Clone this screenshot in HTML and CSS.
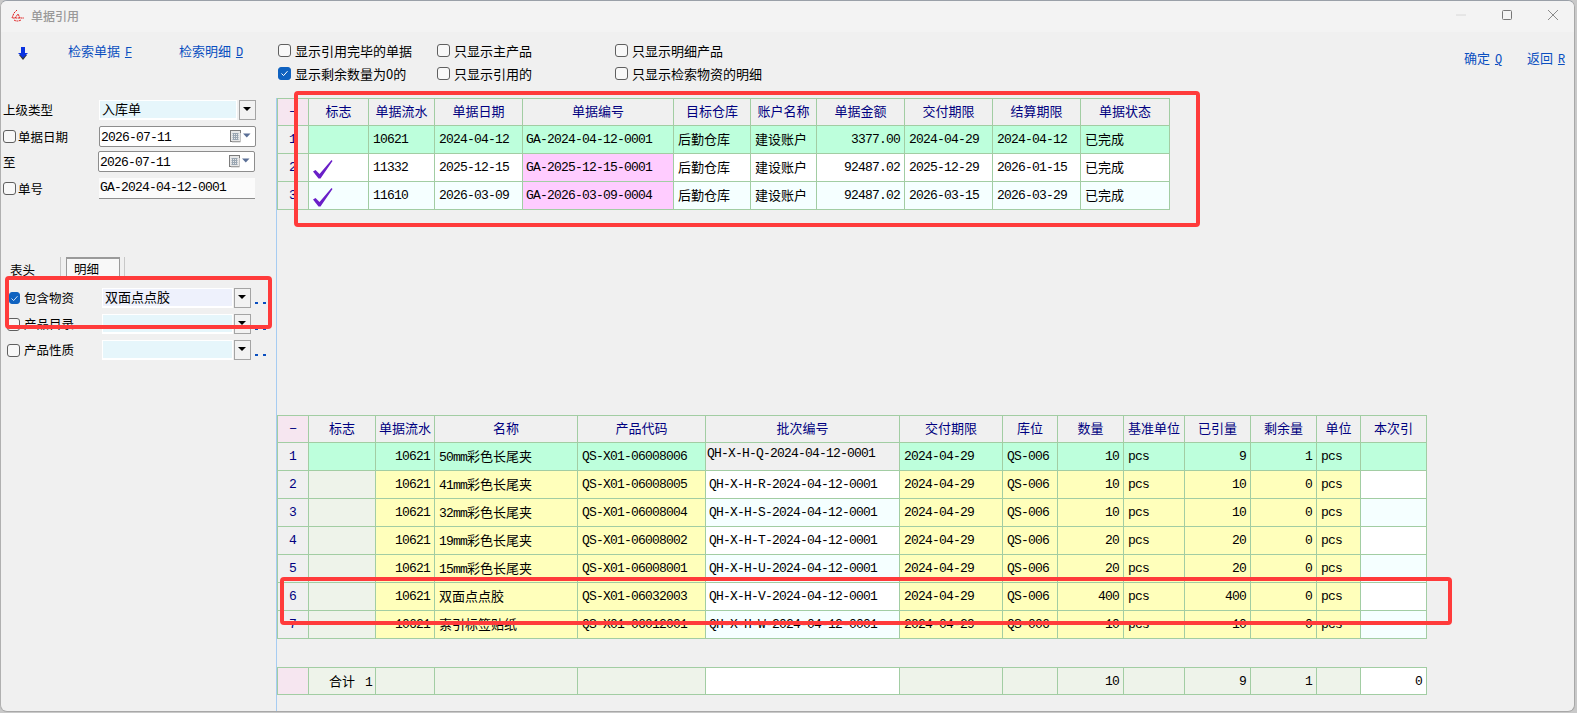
FILE: index.html
```html
<!DOCTYPE html>
<html lang="zh">
<head>
<meta charset="utf-8">
<title>单据引用</title>
<link rel="stylesheet" href="styles.css">
</head>
<body>
<div class="window">
  <header class="titlebar">
    <svg class="logo" width="14" height="13" viewBox="0 0 14 13"><path d="M6 1 3 4 1 9h12M4 9l3-4 2 4M3 11q3 2 7 0" fill="none" stroke="#e02020" stroke-width="1" stroke-dasharray="2 .6"/></svg>
    <span class="wintitle">单据引用</span>
    <span class="winbtns">
      <svg width="12" height="12" viewBox="0 0 12 12"><path d="M1 6h10" stroke="#d8d8d8"/></svg>
      <svg width="12" height="12" viewBox="0 0 12 12"><rect x="1.5" y="1.5" width="9" height="9" rx="1" fill="none" stroke="#777"/></svg>
      <svg width="12" height="12" viewBox="0 0 12 12"><path d="M1 1l10 10M11 1 1 11" stroke="#8a8a8a" fill="none"/></svg>
    </span>
  </header>

  <div class="toolbar">
    <svg class="arrow" width="10" height="13" viewBox="0 0 10 13"><path d="M1 8h8l-4 5z" fill="#333"/><path d="M3 0h4v6h3L5 11 0 6h3z" fill="#0a32e0"/></svg>
    <a class="link l1">检索单据 <u class="m">F</u></a>
    <a class="link l2">检索明细 <u class="m">D</u></a>
    <div class="opts">
      <label class="opt o1"><span class="cb"></span>显示引用完毕的单据</label>
      <label class="opt o2"><span class="cb"></span>只显示主产品</label>
      <label class="opt"><span class="cb"></span>只显示明细产品</label>
      <label class="opt o1"><span class="cb on"><svg width="9" height="9" viewBox="0 0 9 9"><path d="M1.500 4.500 3.600 6.600 7.500 2.200" fill="none" stroke="#fff"/></svg></span>显示剩余数量为0的</label>
      <label class="opt o2"><span class="cb"></span>只显示引用的</label>
      <label class="opt"><span class="cb"></span>只显示检索物资的明细</label>
    </div>
    <div class="actions">
      <a class="link a1">确定 <u class="m">Q</u></a>
      <a class="link a2">返回 <u class="m">R</u></a>
    </div>
  </div>

  <div class="body">
    <aside class="side">
      <div class="frow r1"><span class="lab lab0">上级类型</span><span class="combo">入库单</span><span class="drop"></span></div>
      <div class="frow r2"><span class="cb"></span><span class="lab lab1">单据日期</span><span class="date m"><span class="dt">2026-07-11</span><svg class="cal" width="22" height="13" viewBox="0 0 22 13"><rect x="1.500" y=".5" width="10" height="11" fill="#e8e8e8" stroke="#7c7c7c"/><path d="M11.500 3v9H3" fill="none" stroke="#c4c4c4"/><path d="M3.500 3.500h6M3.500 5.500h6M3.500 7.500h6M3.500 9.500h6M4.500 3v7M6.500 3v7M8.500 3v7" stroke="#9aa6b2"/><path d="M14 3.500h7.500l-3.750 4z" fill="#5a6f96"/></svg></span></div>
      <div class="frow r3"><span class="lab lab2">至</span><span class="date m"><span class="dt">2026-07-11</span><svg class="cal" width="22" height="13" viewBox="0 0 22 13"><rect x="1.500" y=".5" width="10" height="11" fill="#e8e8e8" stroke="#7c7c7c"/><path d="M11.500 3v9H3" fill="none" stroke="#c4c4c4"/><path d="M3.500 3.500h6M3.500 5.500h6M3.500 7.500h6M3.500 9.500h6M4.500 3v7M6.500 3v7M8.500 3v7" stroke="#9aa6b2"/><path d="M14 3.500h7.500l-3.750 4z" fill="#5a6f96"/></svg></span></div>
      <div class="frow r4"><span class="cb"></span><span class="lab lab1">单号</span><span class="input m">GA-2024-04-12-0001</span></div>

      <div class="tabs">
        <span class="tab">表头</span>
        <span class="tabsel"><span class="tabin">明细</span></span>
      </div>

      <div class="frow q1"><span class="cb on sm"><svg width="9" height="9" viewBox="0 0 9 9"><path d="M1.500 4.500 3.600 6.600 7.500 2.200" fill="none" stroke="#cfe0f5"/></svg></span><span class="lab lab3">包含物资</span><span class="combo wide sel">双面点点胶</span><span class="drop"></span><span class="dots"></span></div>
      <div class="frow q2"><span class="cb"></span><span class="lab lab4">产品目录</span><span class="combo wide"></span><span class="drop"></span><span class="dots"></span></div>
      <div class="frow q3"><span class="cb"></span><span class="lab lab4">产品性质</span><span class="combo wide"></span><span class="drop"></span><span class="dots"></span></div>
    </aside>

    <main class="content">
      <table class="grid g1">
        <colgroup><col class="c31"><col class="c60"><col class="c66"><col class="c88"><col class="c151"><col class="c77"><col class="c66"><col class="c88"><col class="c88"><col class="c88"><col class="c89"></colgroup>
        <tr class="head"><th class="pink">−</th><th>标志</th><th>单据流水</th><th>单据日期</th><th>单据编号</th><th>目标仓库</th><th>账户名称</th><th>单据金额</th><th>交付期限</th><th>结算期限</th><th>单据状态</th></tr>
        <tr class="green"><td class="idx">1</td><td></td><td class="m">10621</td><td class="m">2024-04-12</td><td class="m b">GA-2024-04-12-0001</td><td>后勤仓库</td><td>建设账户</td><td class="m r">3377.00</td><td class="m">2024-04-29</td><td class="m">2024-04-12</td><td>已完成</td></tr>
        <tr class="white"><td class="idx">2</td><td><svg class="tick" width="20" height="19" viewBox="0 0 20 19"><path d="M0 11.500 2.500 10 6.500 14 18.500 0 19.500 1 7.500 18.500 5.500 18.500z" fill="#6a1fc8"/></svg></td><td class="m">11332</td><td class="m">2025-12-15</td><td class="m b mag">GA-2025-12-15-0001</td><td>后勤仓库</td><td>建设账户</td><td class="m r">92487.02</td><td class="m">2025-12-29</td><td class="m">2026-01-15</td><td>已完成</td></tr>
        <tr class="cyan"><td class="idx">3</td><td><svg class="tick" width="20" height="19" viewBox="0 0 20 19"><path d="M0 11.500 2.500 10 6.500 14 18.500 0 19.500 1 7.500 18.500 5.500 18.500z" fill="#6a1fc8"/></svg></td><td class="m">11610</td><td class="m">2026-03-09</td><td class="m b mag">GA-2026-03-09-0004</td><td>后勤仓库</td><td>建设账户</td><td class="m r">92487.02</td><td class="m">2026-03-15</td><td class="m">2026-03-29</td><td>已完成</td></tr>
      </table>

      <table class="grid g2">
        <colgroup><col class="c31"><col class="c67"><col class="c59"><col class="c143"><col class="c128"><col class="c194"><col class="c103"><col class="c55"><col class="c66"><col class="c61"><col class="c66"><col class="c66"><col class="c44"><col class="c66"></colgroup>
        <tr class="head"><th class="pink">−</th><th>标志</th><th>单据流水</th><th>名称</th><th>产品代码</th><th>批次编号</th><th>交付期限</th><th>库位</th><th>数量</th><th>基准单位</th><th>已引量</th><th>剩余量</th><th>单位</th><th>本次引</th></tr>
        <tr class="green"><td class="idx">1</td><td></td><td class="m r">10621</td><td><span class="m">50mm</span>彩色长尾夹</td><td class="m">QS-X01-06008006</td><td class="m edit">QH-X-H-Q-2024-04-12-0001</td><td class="m">2024-04-29</td><td class="m">QS-006</td><td class="m r">10</td><td class="m">pcs</td><td class="m r">9</td><td class="m r">1</td><td class="m">pcs</td><td></td></tr>
        <tr class="yellow"><td class="idx">2</td><td class="flag"></td><td class="m r">10621</td><td><span class="m">41mm</span>彩色长尾夹</td><td class="m">QS-X01-06008005</td><td class="m b wh">QH-X-H-R-2024-04-12-0001</td><td class="m">2024-04-29</td><td class="m">QS-006</td><td class="m r">10</td><td class="m">pcs</td><td class="m r">10</td><td class="m r">0</td><td class="m">pcs</td><td class="wh"></td></tr>
        <tr class="yellow"><td class="idx">3</td><td class="flag"></td><td class="m r">10621</td><td><span class="m">32mm</span>彩色长尾夹</td><td class="m">QS-X01-06008004</td><td class="m b cy">QH-X-H-S-2024-04-12-0001</td><td class="m">2024-04-29</td><td class="m">QS-006</td><td class="m r">10</td><td class="m">pcs</td><td class="m r">10</td><td class="m r">0</td><td class="m">pcs</td><td class="cy"></td></tr>
        <tr class="yellow"><td class="idx">4</td><td class="flag"></td><td class="m r">10621</td><td><span class="m">19mm</span>彩色长尾夹</td><td class="m">QS-X01-06008002</td><td class="m b wh">QH-X-H-T-2024-04-12-0001</td><td class="m">2024-04-29</td><td class="m">QS-006</td><td class="m r">20</td><td class="m">pcs</td><td class="m r">20</td><td class="m r">0</td><td class="m">pcs</td><td class="wh"></td></tr>
        <tr class="yellow"><td class="idx">5</td><td class="flag"></td><td class="m r">10621</td><td><span class="m">15mm</span>彩色长尾夹</td><td class="m">QS-X01-06008001</td><td class="m b cy">QH-X-H-U-2024-04-12-0001</td><td class="m">2024-04-29</td><td class="m">QS-006</td><td class="m r">20</td><td class="m">pcs</td><td class="m r">20</td><td class="m r">0</td><td class="m">pcs</td><td class="cy"></td></tr>
        <tr class="yellow"><td class="idx">6</td><td class="flag"></td><td class="m r">10621</td><td>双面点点胶</td><td class="m">QS-X01-06032003</td><td class="m b wh">QH-X-H-V-2024-04-12-0001</td><td class="m">2024-04-29</td><td class="m">QS-006</td><td class="m r">400</td><td class="m">pcs</td><td class="m r">400</td><td class="m r">0</td><td class="m">pcs</td><td class="wh"></td></tr>
        <tr class="yellow"><td class="idx">7</td><td class="flag"></td><td class="m r">10621</td><td>索引标签贴纸</td><td class="m">QS-X01-06012001</td><td class="m b cy">QH-X-H-W-2024-04-12-0001</td><td class="m">2024-04-29</td><td class="m">QS-006</td><td class="m r">10</td><td class="m">pcs</td><td class="m r">10</td><td class="m r">0</td><td class="m">pcs</td><td class="cy"></td></tr>
      </table>

      <table class="grid g3">
        <colgroup><col class="c31"><col class="c67"><col class="c59"><col class="c143"><col class="c128"><col class="c194"><col class="c103"><col class="c55"><col class="c66"><col class="c61"><col class="c66"><col class="c66"><col class="c44"><col class="c66"></colgroup>
        <tr class="total"><td class="pink"></td><td class="r">合计 <span class="m">&nbsp;1</span></td><td></td><td></td><td></td><td class="wh"></td><td></td><td></td><td class="m r">10</td><td></td><td class="m r">9</td><td class="m r">1</td><td></td><td class="m r wh">0</td></tr>
      </table>
    </main>
  </div>

  <div class="mark mark1"></div>
  <div class="mark mark2"></div>
  <div class="mark mark3"></div>
</div>
</body>
</html>
```

FILE: styles.css
```css
* { box-sizing: border-box; }
html, body { margin: 0; padding: 0; height: 100%; overflow: hidden; background: #c9c9c9; }
body {
  font-family: "Noto Sans CJK SC", "Noto Sans", sans-serif;
  font-size: 13px;
  color: #000;
}
.window {
  position: relative;
  width: 1575px;
  height: 712px;
  background: #f0f0f0;
  border-top: 1px solid #9aa0a8;
  border-right: 1px solid #a8a8a8;
  border-bottom: 1px solid #a8a8a8;
  border-left: 1px solid #b0b0b0;
  border-radius: 7px;
  overflow: hidden;
}
.m {
  font-family: "Liberation Mono", "Noto Sans CJK SC", monospace;
  font-size: 13px;
  letter-spacing: -0.8px;
}
.r { text-align: right; }

/* title bar */
.titlebar {
  height: 31px;
  display: flex;
  align-items: center;
  background: #f3f3f3;
  padding: 0 0 3px 10px;
}
.logo { margin-right: 6px; }
.wintitle { color: #999; font-size: 12px; font-weight: 500; }
.winbtns { margin-left: auto; display: flex; gap: 34px; padding-right: 15px; }

/* toolbar */
.toolbar { position: relative; height: 66px; display: flex; }
.arrow { margin: 15px 0 0 17px; }
.link { color: #0a4fc0; font-size: 13px; line-height: 16px; white-space: nowrap; }
.link u { font-size: 12px; letter-spacing: -.4px; margin-left: 2px; }
.l1 { margin: 11px 0 0 40px; width: 111px; }
.l2 { margin-top: 11px; width: 99px; }
.opts {
  display: grid;
  grid-template-columns: 159px 178px auto;
  grid-auto-rows: 23px;
  padding-top: 7px;
  align-content: start;
}
.opt { display: flex; align-items: center; gap: 4px; font-size: 13px; white-space: nowrap; }
.actions { margin-left: auto; display: flex; padding: 18px 0 0 0; }
.a1 { width: 63px; }
.a2 { width: 47px; }

/* checkbox */
.cb {
  flex: none;
  display: inline-flex;
  align-items: center;
  justify-content: center;
  width: 13px;
  height: 13px;
  border: 1px solid #5f5f5f;
  border-radius: 3px;
  background: #f8f8f8;
}
.cb.on { background: #0f62c0; border-color: #0f62c0; }
.cb.sm { width: 11px; height: 12px; }

/* body */
.body { display: flex; height: 613px; }
.side { width: 275px; flex: none; }
.content { flex: 1; border-left: 1px solid #a6ccf2; min-width: 0; }

/* side form */
.frow { display: flex; align-items: center; white-space: nowrap; }
.lab { font-size: 12.500px; padding-bottom: 1px; }
.lab0 { margin-left: 2px; width: 96px; }
.lab1 { margin-left: 2px; width: 81px; }
.lab2 { margin-left: 2px; width: 95px; }
.lab3 { margin-left: 4px; width: 78px; }
.lab4 { margin-left: 4px; width: 78px; }
.r1 { height: 20px; margin-top: 2px; }
.r2 { height: 21px; margin-top: 6px; padding-left: 2px; }
.r3 { height: 21px; margin-top: 4px; }
.r4 { height: 21px; margin-top: 6px; padding-left: 2px; }
.combo {
  display: block;
  width: 138px;
  height: 20px;
  line-height: 16px;
  padding-left: 2px;
  background: #e6f6fb;
  border: 1px solid #fff;
  border-bottom-width: 2px;
}
.combo.wide { width: 131px; padding-left: 2px; line-height: 16px; }
.combo.sel { background: #eef1fc; }
.drop {
  position: relative;
  flex: none;
  width: 17px;
  height: 20px;
  margin-left: 2px;
  border: 1px solid #a4a4a4;
  background: #f2f2f2;
}
.drop::after {
  content: "";
  position: absolute;
  left: 3px;
  top: 6px;
  border-left: 4px solid transparent;
  border-right: 4px solid transparent;
  border-top: 4px solid #000;
}
.combo.wide + .drop { margin-left: 1px; }
.date {
  display: flex;
  align-items: center;
  justify-content: space-between;
  width: 157px;
  height: 21px;
  padding: 0 4px 0 1px;
  background: #fff;
  border: 1px solid #8d8d8d;
  border-radius: 2px;
}
.dt { padding-top: 1px; }
.input {
  display: block;
  width: 156px;
  height: 21px;
  line-height: 20px;
  padding-left: 1px;
  background: #fbfbfb;
  border-bottom: 1px solid #8d8d8d;
}
.dots {
  flex: none;
  width: 12px;
  height: 2px;
  margin: 10px 0 0 4px;
  background: repeating-linear-gradient(90deg, #0a4fc0 0 3px, transparent 3px 8px);
}

/* tabs */
.tabs { display: flex; height: 25px; margin-top: 58px; align-items: flex-start; }
.tab { width: 60px; padding: 3px 0 0 9px; height: 23px; font-size: 12.500px; border-right: 1px solid #c8c8c8; }
.tabsel { margin-left: 5px; width: 59px; height: 23px; border-right: 1px solid #c8c8c8; }
.tabin {
  display: block;
  width: 54px;
  height: 23px;
  padding: 0 0 0 7px;
  font-size: 12.500px;
  border: 1px solid #9a9a9a;
  border-bottom: 0;
  border-top-width: 2px;
  background: #f8f8f8;
}
.q1 { height: 20px; margin-top: 6px; padding-left: 8px; }
.q2 { height: 20px; margin-top: 6px; padding-left: 6px; }
.q3 { height: 20px; margin-top: 6px; padding-left: 6px; }

/* grids */
.grid {
  border-collapse: collapse;
  table-layout: fixed;
  width: 0;
}
.grid th, .grid td {
  border: 1px solid #a2cda3;
  padding: 0 3px 2px 4px;
  height: 28px;
  white-space: nowrap;
  overflow: hidden;
  font-weight: 400;
}
.grid td.m { padding-bottom: 0; padding-left: 4px; }
.grid td.m.b { padding-left: 3px; }
.grid td.r.m { padding-right: 4px; }
.head th { height: 27px; color: #000080; background: #f0f0f0; text-align: center; padding: 0 0 4px; }
.grid th.pink, .grid td.pink { background: #f6e6f0; }
.grid td.idx { background: #f0f0f0; color: #000080; text-align: center; padding: 0; font-family: "Liberation Mono", monospace; }
.green td { background: #bdffdc; }
.white td { background: #fff; }
.cyan td { background: #f5ffff; }
.yellow td { background: #ffffbb; }
.grid td.mag { background: #ffccff; }
.grid td.flag { background: #eef3ea; }
.grid td.wh { background: #fff; }
.grid td.cy { background: #f5ffff; }
.grid td.edit { background: #f0f0f0; padding: 0 0 6px 1px; }
.total td { background: #eef3ea; height: 27px; }
.g2 { margin-top: 205px; }
.g3 { margin-top: 28px; }
.tick { display: block; margin: 5px 0 0 0; }

.c31 { width: 31px; } .c44 { width: 44px; } .c55 { width: 55px; } .c59 { width: 59px; }
.c60 { width: 60px; } .c61 { width: 61px; } .c66 { width: 66px; } .c67 { width: 67px; }
.c77 { width: 77px; } .c88 { width: 88px; } .c89 { width: 89px; } .c103 { width: 103px; }
.c128 { width: 128px; } .c143 { width: 143px; } .c151 { width: 151px; } .c194 { width: 194px; }

/* red annotation frames laid over the screenshot */
.mark { position: absolute; border: 4px solid #ff3b3b; border-radius: 4px; pointer-events: none; }
.mark1 { left: 293px; top: 90px; width: 906px; height: 136px; }
.mark2 { left: 4px; top: 275px; width: 267px; height: 53px; }
.mark3 { left: 279px; top: 576px; width: 1172px; height: 48px; }
```
